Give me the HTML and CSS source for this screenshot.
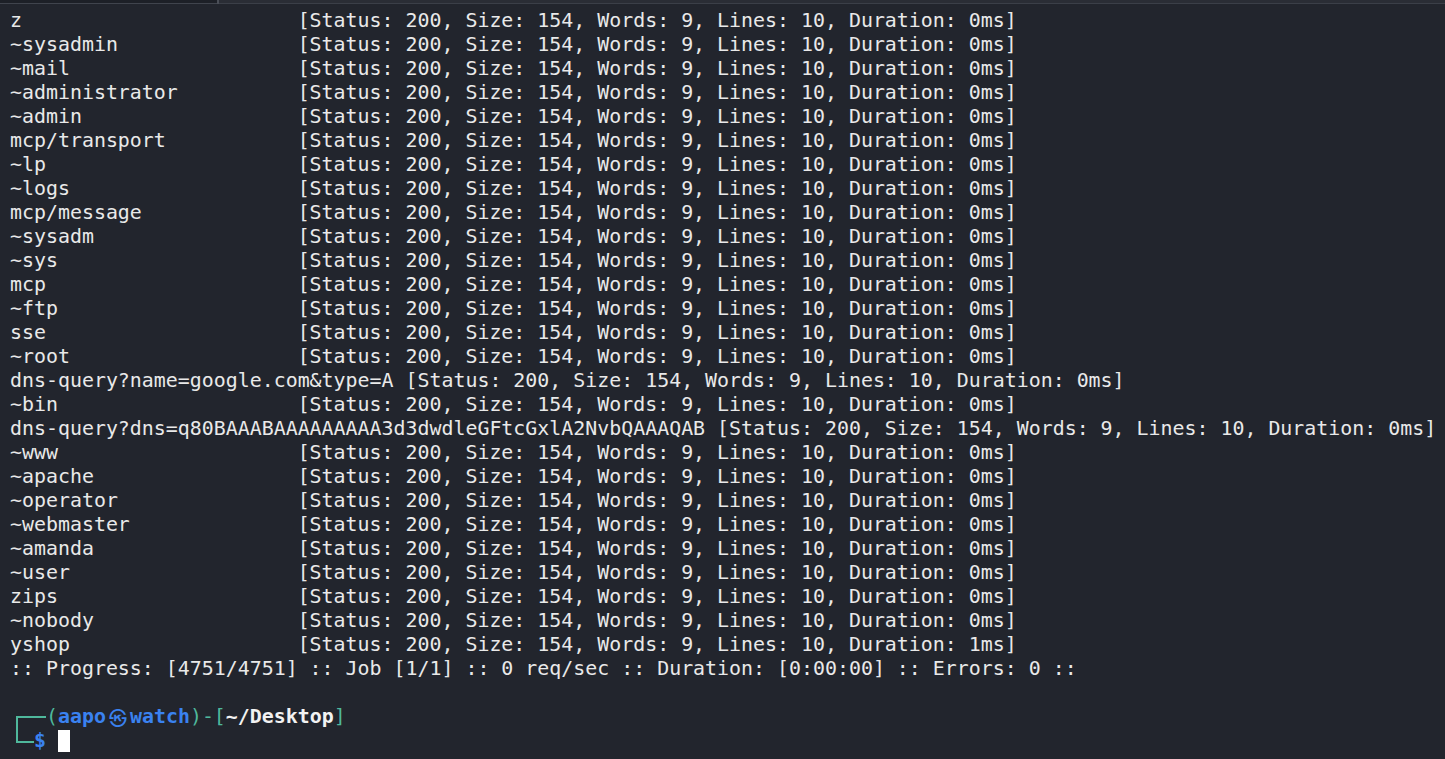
FILE: index.html
```html
<!DOCTYPE html>
<html lang="en">
<head>
<meta charset="utf-8">
<title>Terminal</title>
<link rel="stylesheet" href="styles.css">
</head>
<body>
<div class="window">
  <div class="tabbar">
    <div class="tab tab-active"></div>
    <div class="tab-sep"></div>
    <div class="tab tab-rest"></div>
  </div>
  <div class="term">
<div class="line">z                       [Status: 200, Size: 154, Words: 9, Lines: 10, Duration: 0ms]</div>
<div class="line">~sysadmin               [Status: 200, Size: 154, Words: 9, Lines: 10, Duration: 0ms]</div>
<div class="line">~mail                   [Status: 200, Size: 154, Words: 9, Lines: 10, Duration: 0ms]</div>
<div class="line">~administrator          [Status: 200, Size: 154, Words: 9, Lines: 10, Duration: 0ms]</div>
<div class="line">~admin                  [Status: 200, Size: 154, Words: 9, Lines: 10, Duration: 0ms]</div>
<div class="line">mcp/transport           [Status: 200, Size: 154, Words: 9, Lines: 10, Duration: 0ms]</div>
<div class="line">~lp                     [Status: 200, Size: 154, Words: 9, Lines: 10, Duration: 0ms]</div>
<div class="line">~logs                   [Status: 200, Size: 154, Words: 9, Lines: 10, Duration: 0ms]</div>
<div class="line">mcp/message             [Status: 200, Size: 154, Words: 9, Lines: 10, Duration: 0ms]</div>
<div class="line">~sysadm                 [Status: 200, Size: 154, Words: 9, Lines: 10, Duration: 0ms]</div>
<div class="line">~sys                    [Status: 200, Size: 154, Words: 9, Lines: 10, Duration: 0ms]</div>
<div class="line">mcp                     [Status: 200, Size: 154, Words: 9, Lines: 10, Duration: 0ms]</div>
<div class="line">~ftp                    [Status: 200, Size: 154, Words: 9, Lines: 10, Duration: 0ms]</div>
<div class="line">sse                     [Status: 200, Size: 154, Words: 9, Lines: 10, Duration: 0ms]</div>
<div class="line">~root                   [Status: 200, Size: 154, Words: 9, Lines: 10, Duration: 0ms]</div>
<div class="line">dns-query?name=google.com&amp;type=A [Status: 200, Size: 154, Words: 9, Lines: 10, Duration: 0ms]</div>
<div class="line">~bin                    [Status: 200, Size: 154, Words: 9, Lines: 10, Duration: 0ms]</div>
<div class="line">dns-query?dns=q80BAAABAAAAAAAAA3d3dwdleGFtcGxlA2NvbQAAAQAB [Status: 200, Size: 154, Words: 9, Lines: 10, Duration: 0ms]</div>
<div class="line">~www                    [Status: 200, Size: 154, Words: 9, Lines: 10, Duration: 0ms]</div>
<div class="line">~apache                 [Status: 200, Size: 154, Words: 9, Lines: 10, Duration: 0ms]</div>
<div class="line">~operator               [Status: 200, Size: 154, Words: 9, Lines: 10, Duration: 0ms]</div>
<div class="line">~webmaster              [Status: 200, Size: 154, Words: 9, Lines: 10, Duration: 0ms]</div>
<div class="line">~amanda                 [Status: 200, Size: 154, Words: 9, Lines: 10, Duration: 0ms]</div>
<div class="line">~user                   [Status: 200, Size: 154, Words: 9, Lines: 10, Duration: 0ms]</div>
<div class="line">zips                    [Status: 200, Size: 154, Words: 9, Lines: 10, Duration: 0ms]</div>
<div class="line">~nobody                 [Status: 200, Size: 154, Words: 9, Lines: 10, Duration: 0ms]</div>
<div class="line">yshop                   [Status: 200, Size: 154, Words: 9, Lines: 10, Duration: 1ms]</div>
<div class="line">:: Progress: [4751/4751] :: Job [1/1] :: 0 req/sec :: Duration: [0:00:00] :: Errors: 0 ::</div>
<div class="line"> </div>
<div class="line prompt"><span class="box box-top" aria-hidden="true"></span><span class="teal">(</span><span class="blue">aapo<span class="skull">㉿</span>watch</span><span class="teal">)-[</span><span class="path">~/Desktop</span><span class="teal">]</span></div>
<div class="line prompt"><span class="box box-bottom" aria-hidden="true"></span><span class="blue">$</span> <span class="cursor"></span></div>
  </div>
</div>
</body>
</html>
```

FILE: styles.css
```css
html, body {
  margin: 0;
  padding: 0;
  background: #22252d;
}

.window {
  width: 1445px;
  height: 759px;
  overflow: hidden;
  background: #22252d;
  display: flex;
  flex-direction: column;
}

.tabbar {
  display: flex;
  height: 4px;
  flex: none;
}

.tab {
  height: 3px;
  border-bottom: 1px solid #3b3f48;
}

.tab-active {
  width: 217px;
  background: #1d2027;
  border-bottom-color: #40444d;
}

.tab-sep {
  width: 2px;
  background: #4a4e57;
}

.tab-rest {
  flex: 1;
  background: #2a2d35;
}

.term {
  padding: 5px 0 0 10px;
  font-family: "DejaVu Sans Mono", "Liberation Mono", monospace;
  font-size: 19.92px;
  line-height: 24px;
  color: #e9e9e9;
}

.line {
  white-space: pre;
  height: 24px;
}

.teal {
  color: #4fb89c;
}

.blue {
  color: #3a82f0;
  font-weight: bold;
}

.path {
  color: #f2f2f2;
  font-weight: bold;
}

.skull {
  display: inline-block;
  vertical-align: top;
  width: 24px;
  height: 24px;
  line-height: 24px;
  text-align: center;
  font-family: "Noto Sans CJK KR", "Noto Sans CJK SC", sans-serif;
  font-weight: bold;
  font-size: 18px;
}

.box {
  display: inline-block;
  position: relative;
  width: 36px;
  height: 24px;
  vertical-align: top;
}

.box-top::before {
  content: "";
  position: absolute;
  left: 6px;
  top: 11px;
  width: 30px;
  height: 13px;
  border-left: 2px solid #4fb89c;
  border-top: 2px solid #4fb89c;
  box-sizing: border-box;
}

.box-bottom {
  width: 24px;
}

.box-bottom::before {
  content: "";
  position: absolute;
  left: 6px;
  top: 0;
  width: 18px;
  height: 14px;
  border-left: 2px solid #4fb89c;
  border-bottom: 2px solid #4fb89c;
  box-sizing: border-box;
}

.cursor {
  display: inline-block;
  width: 12px;
  height: 22px;
  background: #ffffff;
  vertical-align: -5px;
}
```
